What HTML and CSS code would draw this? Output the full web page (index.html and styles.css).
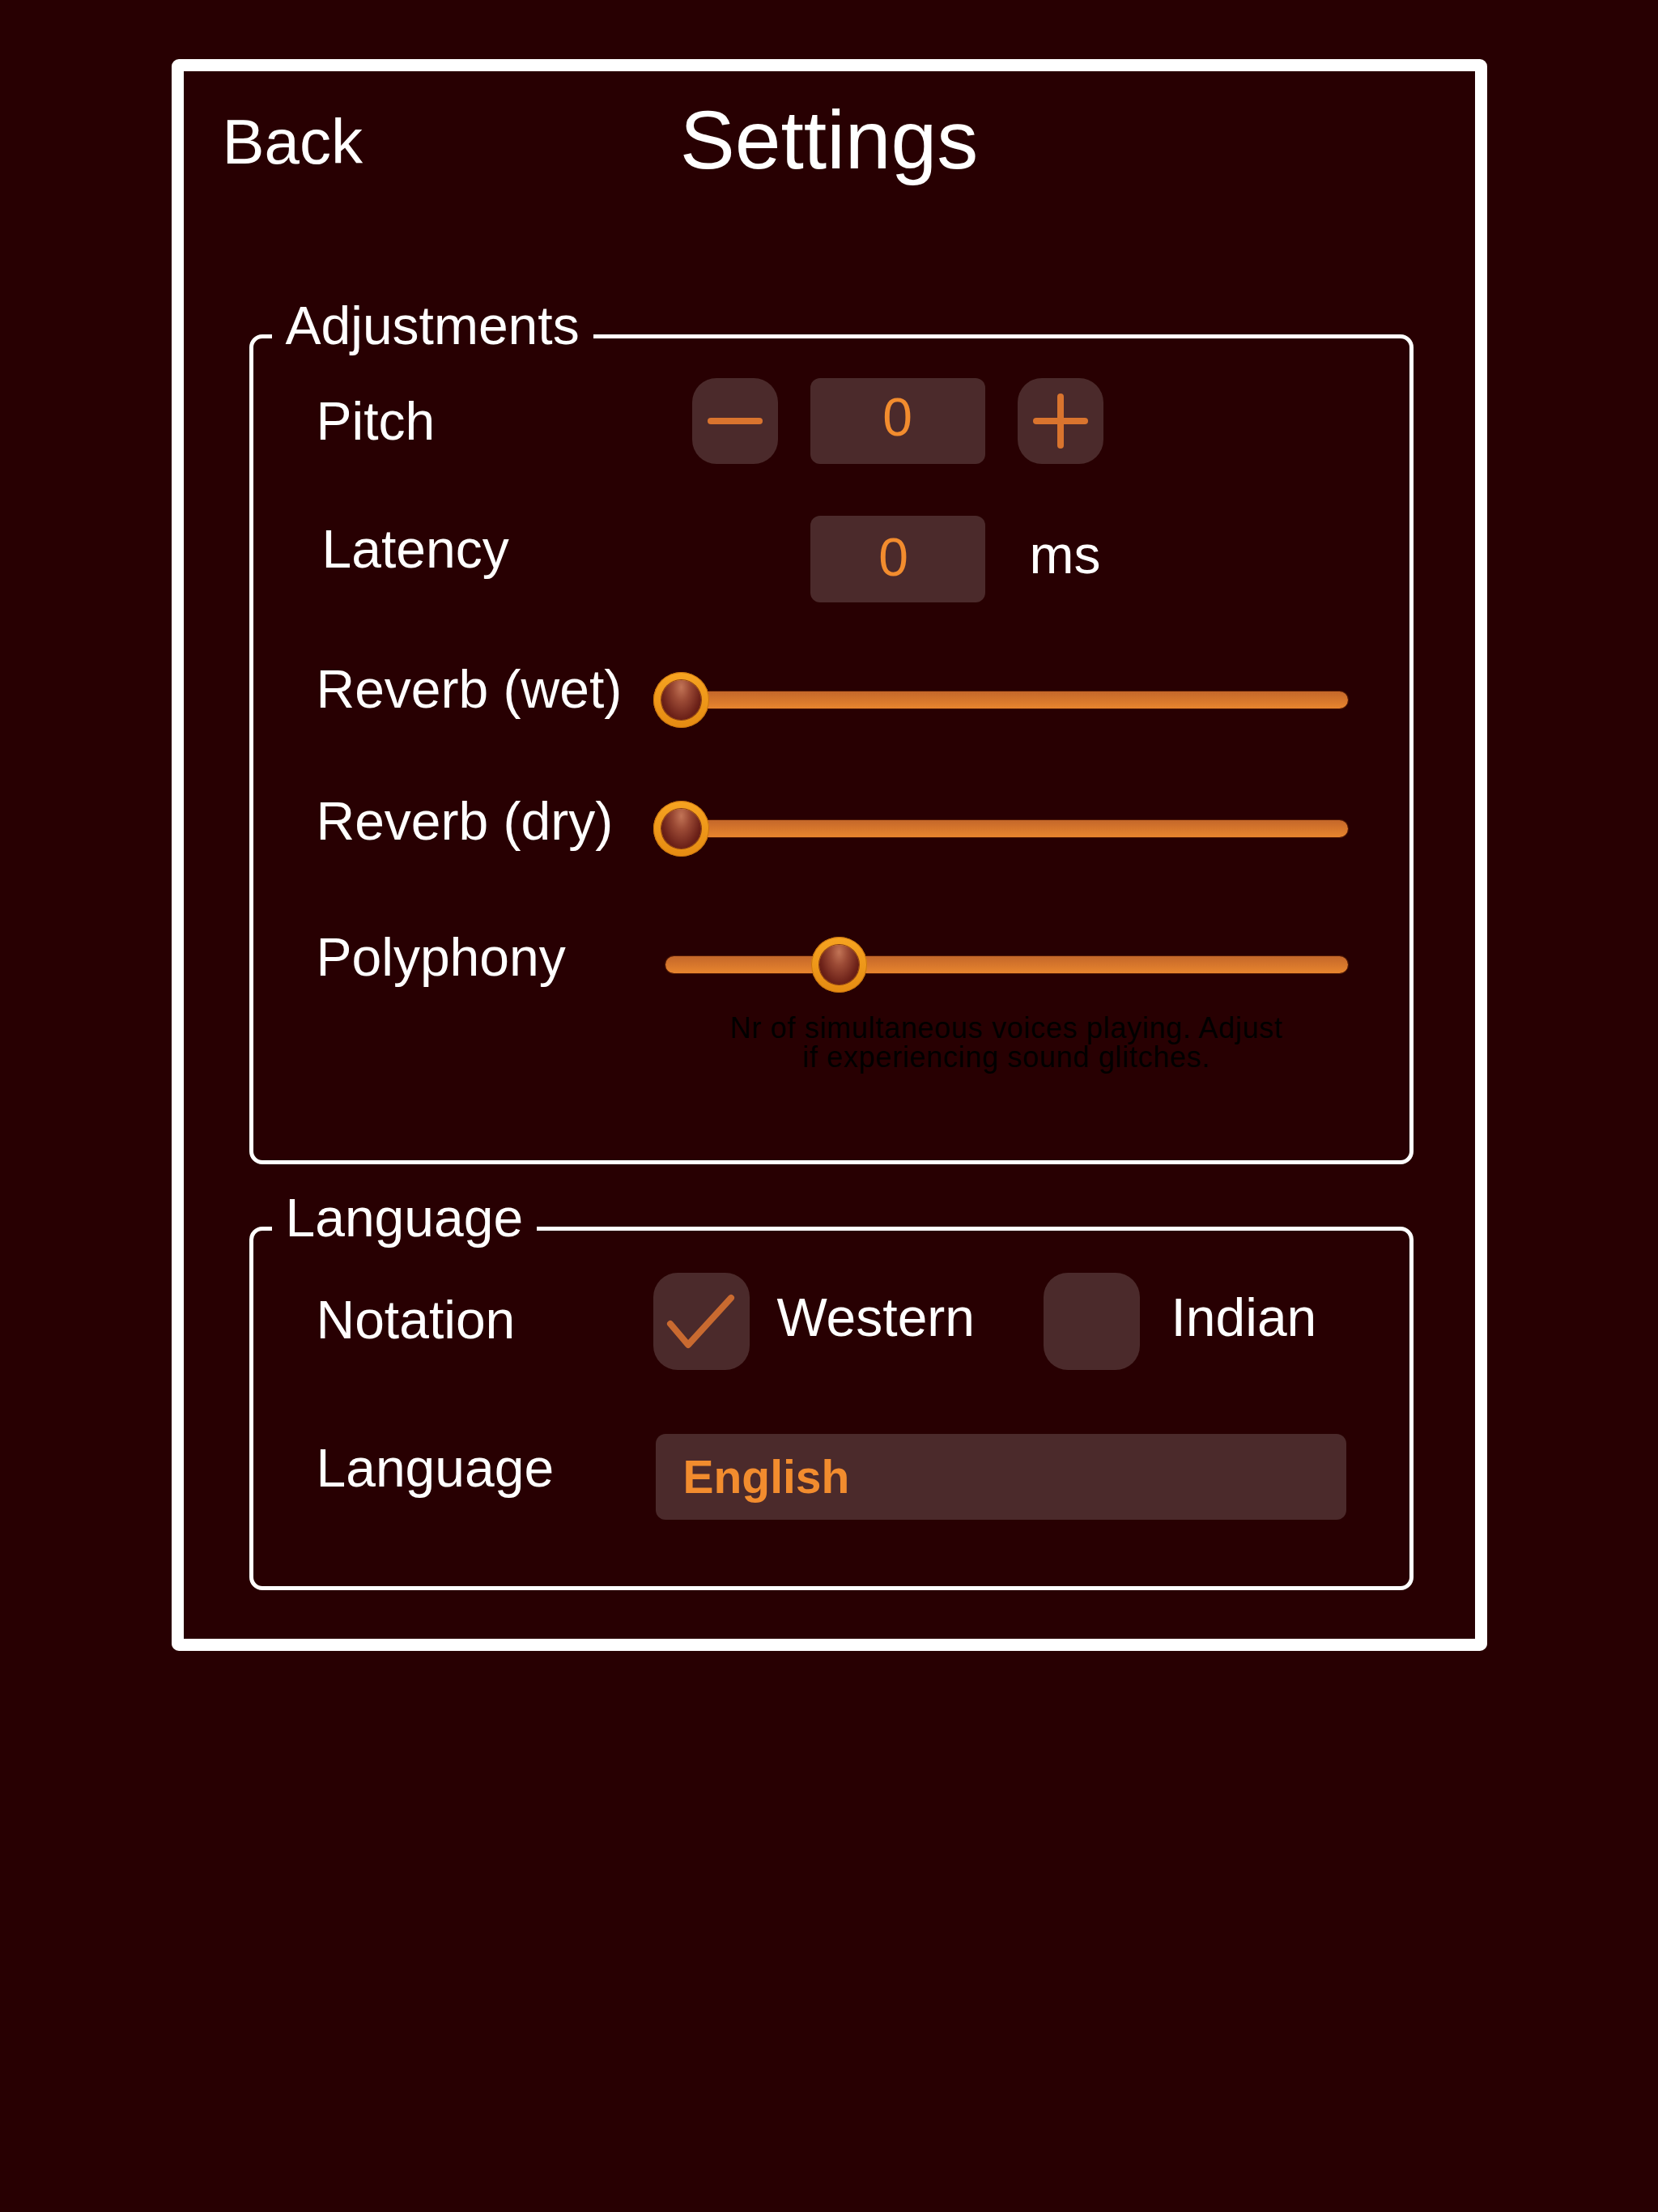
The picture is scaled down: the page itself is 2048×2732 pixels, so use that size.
FILE: index.html
```html
<!DOCTYPE html>
<html lang="en">
<head>
<meta charset="utf-8">
<title>Settings</title>
<link rel="stylesheet" href="styles.css">
</head>
<body>
<main class="frame">
  <header class="header">
    <a class="back" href="#">Back</a>
    <h1 class="title">Settings</h1>
    <span></span>
  </header>

  <fieldset class="group">
    <legend class="legend">Adjustments</legend>
    <div class="group-body body-adjust">
      <div class="row">
        <span class="label label-pitch">Pitch</span>
        <div class="stepper">
          <button class="step-btn" type="button" aria-label="Decrease">
            <svg width="106" height="106" viewBox="0 0 106 106"><line x1="23" y1="53" x2="83" y2="53" stroke="#d9742e" stroke-width="8" stroke-linecap="round"/></svg>
          </button>
          <div class="value value-pitch">0</div>
          <button class="step-btn" type="button" aria-label="Increase">
            <svg width="106" height="106" viewBox="0 0 106 106"><line x1="23" y1="53" x2="83" y2="53" stroke="#d9742e" stroke-width="8" stroke-linecap="round"/><line x1="53" y1="23" x2="53" y2="83" stroke="#d9742e" stroke-width="8" stroke-linecap="round"/></svg>
          </button>
        </div>
      </div>

      <div class="row row-latency">
        <span class="label label-latency">Latency</span>
        <div class="latency">
          <div class="value value-latency">0</div>
          <span class="unit">ms</span>
        </div>
      </div>

      <div class="row row-wet">
        <span class="label label-slider">Reverb (wet)</span>
        <div class="slider">
          <div class="track"></div>
          <div class="thumb" style="left:0px"></div>
        </div>
      </div>

      <div class="row row-dry">
        <span class="label label-dry">Reverb (dry)</span>
        <div class="slider">
          <div class="track"></div>
          <div class="thumb" style="left:0px"></div>
        </div>
      </div>

      <div class="row row-poly">
        <span class="label label-dry">Polyphony</span>
        <div class="slider">
          <div class="track"></div>
          <div class="thumb" style="left:195px"></div>
        </div>
      </div>

      <p class="hint">Nr of simultaneous voices playing. Adjust<br>if experiencing sound glitches.</p>
    </div>
  </fieldset>

  <fieldset class="group group-lang">
    <legend class="legend">Language</legend>
    <div class="group-body body-lang">
      <div class="row row-notation">
        <span class="label label-notation">Notation</span>
        <div class="options">
          <div class="option">
            <span class="check">
              <svg width="119" height="120" viewBox="0 0 119 120"><polyline points="21,63 43,89 96,31" fill="none" stroke="#c96a30" stroke-width="8" stroke-linecap="round" stroke-linejoin="round"/></svg>
            </span>
            <span class="option-text">Western</span>
          </div>
          <div class="option">
            <span class="check"></span>
            <span class="option-text option-text-indian">Indian</span>
          </div>
        </div>
      </div>

      <div class="row row-language">
        <span class="label label-language">Language</span>
        <div class="select">English</div>
      </div>
    </div>
  </fieldset>
</main>
</body>
</html>
```

FILE: styles.css
```css
* {
  box-sizing: border-box;
}

html,
body {
  margin: 0;
  background: #280002;
}

body {
  min-height: 2732px;
  font-family: "Liberation Sans", Arial, Helvetica, sans-serif;
  color: #ffffff;
}

.frame {
  width: 1625px;
  height: 1966px;
  margin: 73px auto 0;
  border: 15px solid #ffffff;
  border-radius: 9px;
}

/* Header */
.header {
  display: grid;
  grid-template-columns: 1fr auto 1fr;
  align-items: start;
  height: 276px;
  padding: 34px 48px 0;
}

.back {
  margin-top: 14px;
  font-size: 78px;
  line-height: 78px;
  color: #ffffff;
  text-decoration: none;
  justify-self: start;
}

.title {
  margin: 0;
  font-size: 102px;
  line-height: 102px;
  font-weight: 400;
}

/* Groups */
.group {
  margin: 0 76px 0 81px;
  padding: 0;
  border: 5px solid #ffffff;
  border-radius: 16px;
  min-width: 0;
}

.group-lang {
  margin-top: 28px;
}

.legend {
  margin-left: 23px;
  padding: 0 17px 27px;
  font-size: 66px;
  line-height: 76px;
}

.group-body {
  padding: 0 61px 0 78px;
}

.body-adjust {
  padding-bottom: 109px;
}

.body-lang {
  padding-bottom: 82px;
}

/* Rows */
.row {
  display: grid;
  grid-template-columns: 416px 1fr;
  align-items: start;
}

.label {
  font-size: 66px;
  line-height: 76px;
  white-space: nowrap;
}

.label-pitch { margin-top: 15px; }

.row-latency { margin-top: 64px; }
.label-latency { margin-top: 3px; padding-left: 7px; }

.row-wet { margin-top: 86px; }
.label-slider { margin-top: -17px; }

.row-dry { margin-top: 89px; }
.label-dry { margin-top: -13px; }

.row-poly { margin-top: 98px; }

.row-notation { margin-top: 3px; }
.label-notation { margin-top: 20px; }

.row-language { margin-top: 79px; }
.label-language { margin-top: 4px; }

/* Stepper */
.stepper {
  display: flex;
  gap: 40px;
  margin-left: 48px;
}

.step-btn {
  width: 106px;
  height: 106px;
  padding: 0;
  border: 0;
  border-radius: 30px;
  background: #4b2a2b;
  display: block;
}

.step-btn svg {
  display: block;
}

.value {
  width: 216px;
  height: 106px;
  border-radius: 12px;
  background: #4b2a2b;
  color: #f28c2e;
  font-size: 66px;
  line-height: 76px;
  display: flex;
  align-items: center;
  justify-content: center;
}

.value-pitch {
  padding-bottom: 10px;
}

.latency {
  display: flex;
  align-items: flex-start;
  margin-left: 194px;
}

.value-latency {
  height: 107px;
  padding-bottom: 6px;
  padding-right: 10px;
}

.unit {
  margin: 10px 0 0 55px;
  font-size: 66px;
  line-height: 76px;
}

/* Sliders */
.slider {
  position: relative;
  width: 873px;
  height: 70px;
}

.track {
  height: 21px;
  margin: 24px 15px 0;
  border-radius: 11px;
  background: linear-gradient(#c4672a, #e8852e);
  box-shadow: 0 0 0 1px rgba(120, 50, 10, 0.5);
}

.thumb {
  position: absolute;
  top: 0;
  width: 69px;
  height: 69px;
  border-radius: 50%;
  background: linear-gradient(#f7a421, #e58b12);
  box-shadow: inset 0 0 0 1px #c8730f;
}

.thumb::after {
  content: "";
  position: absolute;
  left: 10px;
  top: 10px;
  width: 49px;
  height: 49px;
  border-radius: 50%;
  background: radial-gradient(ellipse at 50% 18%, #c27456 0%, #9b4a35 30%, #6d2219 68%, #4f0f0c 100%);
  box-shadow: 0 0 0 1px #8a3f12;
}

.hint {
  margin: 25px 0 0 416px;
  text-align: center;
  font-size: 36px;
  line-height: 36px;
  letter-spacing: 0.7px;
  color: #000000;
}

/* Language section */
.options {
  display: grid;
  grid-template-columns: 482px auto;
}

.option {
  display: flex;
  align-items: flex-start;
}

.check {
  display: block;
  width: 119px;
  height: 120px;
  border-radius: 30px;
  background: #4b2a2b;
}

.check svg {
  display: block;
}

.option-text {
  margin: 17px 0 0 34px;
  font-size: 66px;
  line-height: 76px;
}

.option-text-indian {
  margin-left: 39px;
}

.select {
  width: 853px;
  height: 106px;
  margin-left: 3px;
  padding-left: 34px;
  border-radius: 12px;
  background: #4b2a2b;
  color: #f28c2e;
  font-size: 57px;
  font-weight: 700;
  line-height: 66px;
  display: flex;
  align-items: center;
}
```
